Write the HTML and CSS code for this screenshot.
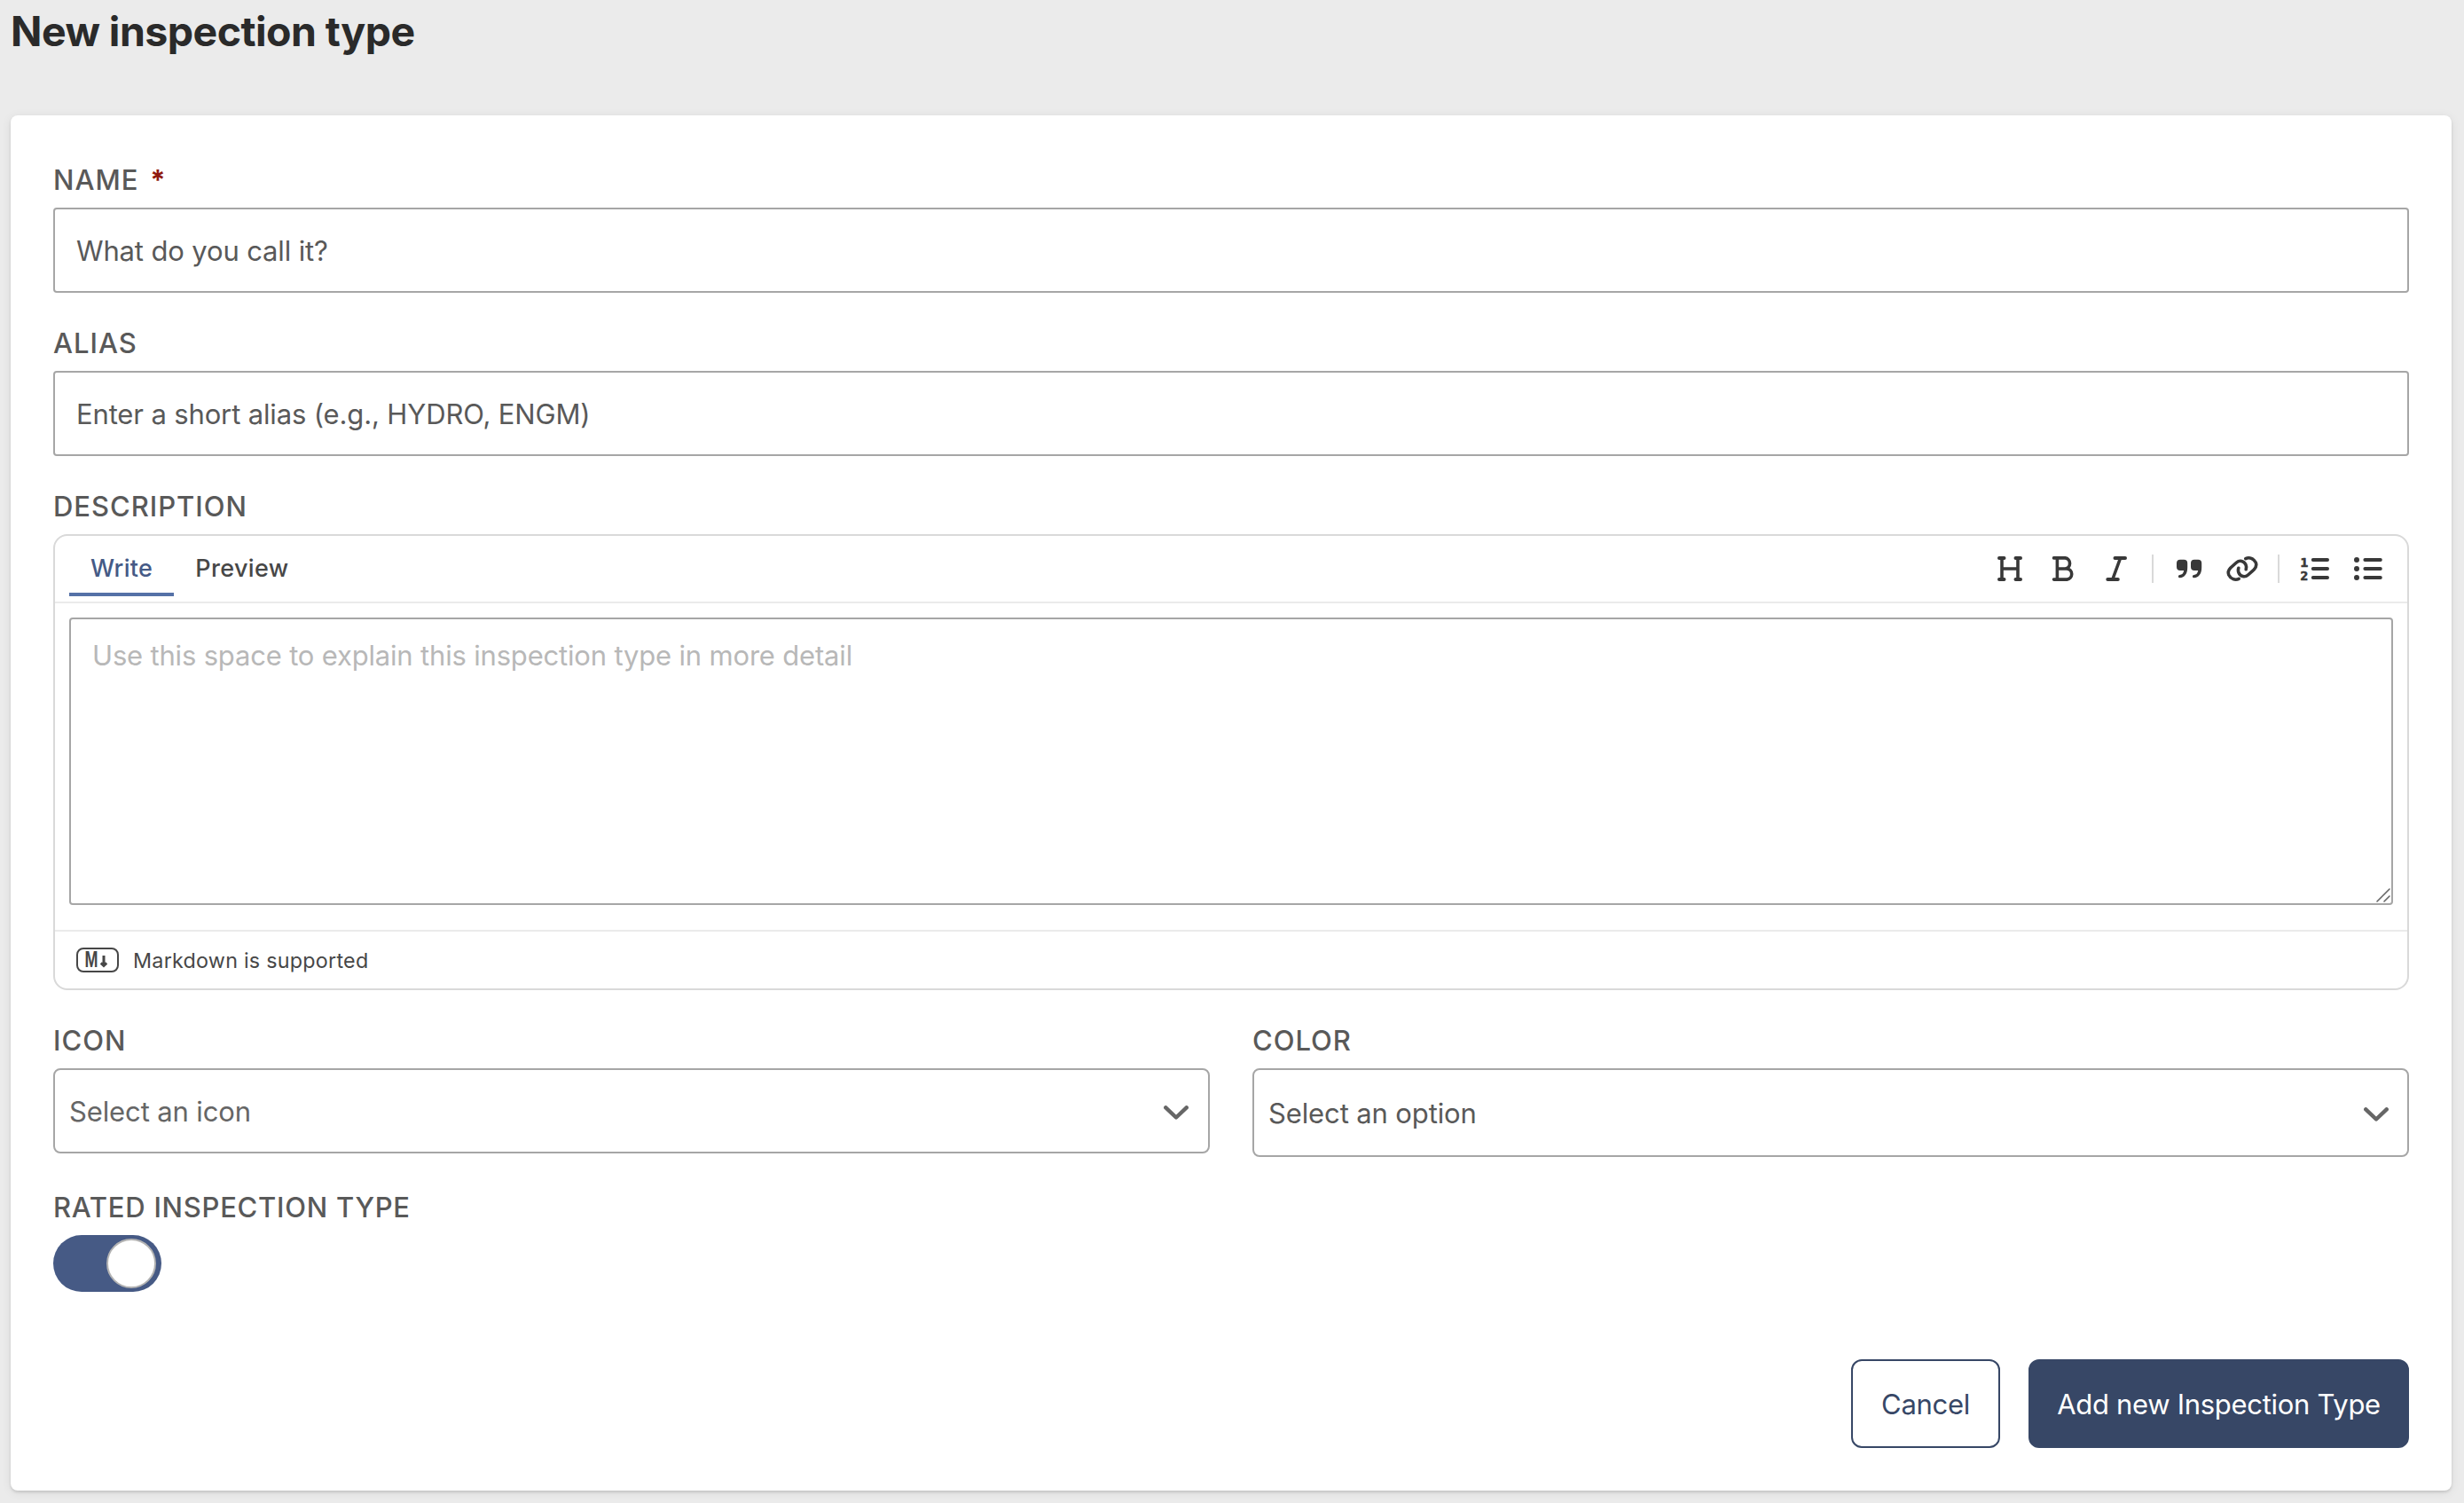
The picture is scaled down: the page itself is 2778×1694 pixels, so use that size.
FILE: index.html
```html
<!DOCTYPE html>
<html lang="en">
<head>
    <meta charset="UTF-8">
    <meta name="viewport" content="width=device-width, initial-scale=1.0">
    <title>New inspection type</title>
    <link rel="stylesheet" href="styles.css">
</head>
<body>
    <h1 class="page-title">New inspection type</h1>

    <form class="card">
        <div class="field">
            <label class="label" for="name">NAME<span class="required">*</span></label>
            <input class="input" type="text" id="name" placeholder="What do you call it?">
        </div>

        <div class="field">
            <label class="label" for="alias">ALIAS</label>
            <input class="input" type="text" id="alias" placeholder="Enter a short alias (e.g., HYDRO, ENGM)">
        </div>

        <div class="field">
            <label class="label" for="description">DESCRIPTION</label>
            <div class="editor">
                <div class="editor-header">
                    <div class="tabs">
                        <button type="button" class="tab active">Write</button>
                        <button type="button" class="tab">Preview</button>
                    </div>
                    <div class="toolbar">
                        <!-- Heading -->
                        <svg class="tool" viewBox="0 0 32 32">
                            <path stroke-width="4" d="M4 4h5.5M22.5 4H28M4 28h5.5M22.5 28H28" />
                            <path d="M7 4v24M25 4v24M7 16h18" />
                        </svg>
                        <!-- Bold -->
                        <svg class="tool" viewBox="0 0 32 32">
                            <path d="M5.5 3.9H18.4a5.9 6.1 0 0 1 0 12.1H9.4M18 16h2.4a6.1 6.1 0 0 1 0 12.1H5.5M9.4 4v24" />
                        </svg>
                        <!-- Italic -->
                        <svg class="tool" viewBox="0 0 32 32">
                            <path stroke-width="4" d="M14.5 4H26M6.3 28h11.5" />
                            <path d="M20.6 4L11.8 28" />
                        </svg>
                        <span class="divider"></span>
                        <!-- Quote -->
                        <svg class="tool tool-solid" viewBox="0 0 32 32">
                            <path d="M2 9.7a4 4 0 0 1 4-4h4.2a4 4 0 0 1 4 4v4.8c0 7-3 11.4-8.5 11.8a1.7 1.7 0 0 1-.2-3.4c2.5-.2 4.2-1.8 4.7-5H6a4 4 0 0 1-4-4z" />
                            <path d="M18 9.7a4 4 0 0 1 4-4h4.2a4 4 0 0 1 4 4v4.8c0 7-3 11.4-8.5 11.8a1.7 1.7 0 0 1-.2-3.4c2.5-.2 4.2-1.8 4.7-5H22a4 4 0 0 1-4-4z" />
                        </svg>
                        <!-- Link -->
                        <svg class="tool" viewBox="0 0 32 32">
                            <path d="M12.2 27.4C8 29.5 3 27.5.8 23-.5 20 .5 17.5 2.8 15L9.5 9C13 6 18 7 20 11.5c.8 1.8.7 3.5.2 5.2" />
                            <path transform="rotate(180 16 16)" d="M12.2 27.4C8 29.5 3 27.5.8 23-.5 20 .5 17.5 2.8 15L9.5 9C13 6 18 7 20 11.5c.8 1.8.7 3.5.2 5.2" />
                        </svg>
                        <span class="divider"></span>
                        <!-- Numbered list -->
                        <svg class="tool" viewBox="0 0 32 32">
                            <path stroke-width="4" d="M13.8 6H30M13.8 16H30M13.8 26H30" />
                            <text class="tool-number" x="-.5" y="13.7">1</text>
                            <text class="tool-number" x="-.5" y="29">2</text>
                        </svg>
                        <!-- Bulleted list -->
                        <svg class="tool" viewBox="0 0 32 32">
                            <path stroke-width="4" d="M12.4 6h17.4M12.4 16h17.4M12.4 26h17.4" />
                            <path stroke-width="6" d="M3 6h0M3 16h0M3 26h0" />
                        </svg>
                    </div>
                </div>
                <div class="editor-body">
                    <textarea class="textarea" id="description" placeholder="Use this space to explain this inspection type in more detail"></textarea>
                    <svg class="resize-handle" viewBox="0 0 16 16"><path d="M1 15L15 1M9 15l6-6" /></svg>
                </div>
                <div class="editor-footer">
                    <svg class="markdown-icon" viewBox="0 0 48 28">
                        <rect x="1" y="1" width="46" height="26" rx="7" />
                        <text x="9.6" y="21.5" textLength="15" lengthAdjust="spacingAndGlyphs">M</text>
                        <path d="M31 9v11M27.8 17.4l3.2 3 3.2-3" />
                    </svg>
                    Markdown is supported
                </div>
            </div>
        </div>

        <div class="row">
            <div>
                <div class="label">ICON</div>
                <div class="select select-icon">
                    Select an icon
                    <svg class="chevron" viewBox="0 0 28 16"><path d="M2.3 2.3L14 13.5 25.7 2.3" /></svg>
                </div>
            </div>
            <div>
                <div class="label">COLOR</div>
                <div class="select select-color">
                    Select an option
                    <svg class="chevron" viewBox="0 0 28 16"><path d="M2.3 2.3L14 13.5 25.7 2.3" /></svg>
                </div>
            </div>
        </div>

        <div class="label label-toggle">RATED INSPECTION TYPE</div>
        <div class="toggle"><span class="knob"></span></div>

        <div class="actions">
            <button type="button" class="btn btn-cancel">Cancel</button>
            <button type="button" class="btn btn-primary">Add new Inspection Type</button>
        </div>
    </form>
</body>
</html>
```
FILE: styles.css
```css
* {
    box-sizing: border-box;
}

body {
    margin: 0;
    padding: 5px 14px 14px 12px;
    background: #ebebeb;
    color: #595959;
    font-family: Inter, sans-serif;
    font-size: 31px;
}

.page-title {
    margin: 0 0 65px;
    font-size: 46.5px;
    line-height: 60px;
    font-weight: 700;
    letter-spacing: -0.55px;
    color: #2a2a2a;
}

.card {
    background: #fff;
    padding: 52px 48px 48px;
    border-radius: 8px;
    box-shadow: 0 2px 3px rgba(0, 0, 0, 0.12), 0 2px 12px rgba(0, 0, 0, 0.08);
}

.field {
    margin-bottom: 36px;
}

.label {
    display: block;
    margin-bottom: 10px;
    font-weight: 540;
    line-height: 42px;
    letter-spacing: 0.98px;
    color: #595959;
}

.required {
    margin-left: 13px;
    font-weight: 700;
    color: #8f1a10;
}

.input {
    display: block;
    width: 100%;
    height: 96px;
    padding: 0 24px;
    border: 2px solid #a6a6a6;
    border-radius: 4px;
    font: inherit;
    letter-spacing: -0.14px;
}

.input::placeholder {
    color: #595959;
}

/* Markdown editor */
.editor {
    border: 2px solid #d9d9d9;
    border-radius: 16px;
}

.editor-header {
    display: flex;
    justify-content: space-between;
    height: 76px;
    padding: 0 28px 0 16px;
    border-bottom: 2px solid #ebebeb;
}

.tabs {
    display: flex;
    padding-bottom: 6px;
}

.tab {
    padding: 8px 24px 0;
    border: none;
    border-bottom: 4px solid transparent;
    background: none;
    font: inherit;
    font-size: 27px;
    font-weight: 540;
    letter-spacing: 0.35px;
    color: #474747;
}

.tab.active {
    border-bottom-color: #5571a7;
    color: #455a86;
}

.toolbar {
    display: flex;
    align-items: center;
    gap: 28px;
}

.tool {
    width: 32px;
    height: 32px;
    overflow: visible;
    fill: none;
    stroke: #383838;
    stroke-width: 3.6;
    stroke-linecap: round;
    stroke-linejoin: round;
}

.tool-solid {
    fill: #383838;
    stroke: none;
}

.tool-number {
    fill: #383838;
    stroke-width: 0.7;
    font: 700 14.5px "DejaVu Sans Mono", monospace;
}

.divider {
    width: 2px;
    height: 32px;
    margin: 0 -4px;
    background: #d9d9d9;
}

.editor-body {
    position: relative;
    padding: 16px 16px 28px;
}

.textarea {
    display: block;
    width: 100%;
    height: 324px;
    padding: 17px 24px;
    border: 2px solid #a6a6a6;
    border-radius: 4px;
    resize: none;
    font: inherit;
    line-height: 48px;
    letter-spacing: -0.18px;
}

.textarea::placeholder {
    color: #b8b8b8;
}

.resize-handle {
    position: absolute;
    right: 19px;
    bottom: 31px;
    width: 16px;
    height: 16px;
    fill: none;
    stroke: #666;
    stroke-width: 1.6;
    stroke-linecap: round;
}

.editor-footer {
    display: flex;
    align-items: center;
    gap: 16px;
    height: 66px;
    padding-left: 24px;
    border-top: 2px solid #ebebeb;
    font-size: 23.3px;
    letter-spacing: 0.25px;
    color: #474747;
}

.markdown-icon {
    width: 48px;
    height: 28px;
    fill: none;
    stroke: #474747;
    stroke-width: 2;
}

.markdown-icon path {
    stroke-width: 3;
}

.markdown-icon text {
    fill: #474747;
    stroke: none;
    font: 700 25px "Liberation Sans", sans-serif;
    letter-spacing: 0;
}

/* Selects */
.row {
    display: grid;
    grid-template-columns: 1fr 1fr;
    align-items: start;
    gap: 48px;
    margin-bottom: 36px;
}

.select {
    display: flex;
    align-items: center;
    justify-content: space-between;
    padding: 0 22px 0 16px;
    border: 2px solid #a6a6a6;
    border-radius: 8px;
    letter-spacing: -0.12px;
}

.select-icon {
    height: 96px;
    color: #666;
}

.select-color {
    height: 100px;
    padding-right: 21px;
}

.chevron {
    width: 28px;
    height: 16px;
    margin-top: 4px;
    fill: none;
    stroke: #666;
    stroke-width: 4.4;
    stroke-linecap: round;
    stroke-linejoin: round;
}

.label-toggle {
    letter-spacing: 0.74px;
}

.toggle {
    display: flex;
    justify-content: flex-end;
    width: 122px;
    height: 64px;
    padding: 4px 6px;
    border-radius: 32px;
    background: #465a85;
}

.knob {
    width: 56px;
    height: 56px;
    border: 2px solid #b3b3b3;
    border-radius: 50%;
    background: #fff;
}

.actions {
    display: flex;
    justify-content: flex-end;
    gap: 32px;
    margin-top: 76px;
}

.btn {
    height: 100px;
    border: 2px solid #374766;
    border-radius: 12px;
    font: inherit;
}

.btn-cancel {
    width: 168px;
    padding: 1px 0 0;
    background: #fff;
    color: #374766;
    letter-spacing: -0.3px;
}

.btn-primary {
    width: 429px;
    padding: 1px 0 0;
    background: #374766;
    color: #fff;
    letter-spacing: -0.3px;
}
```
